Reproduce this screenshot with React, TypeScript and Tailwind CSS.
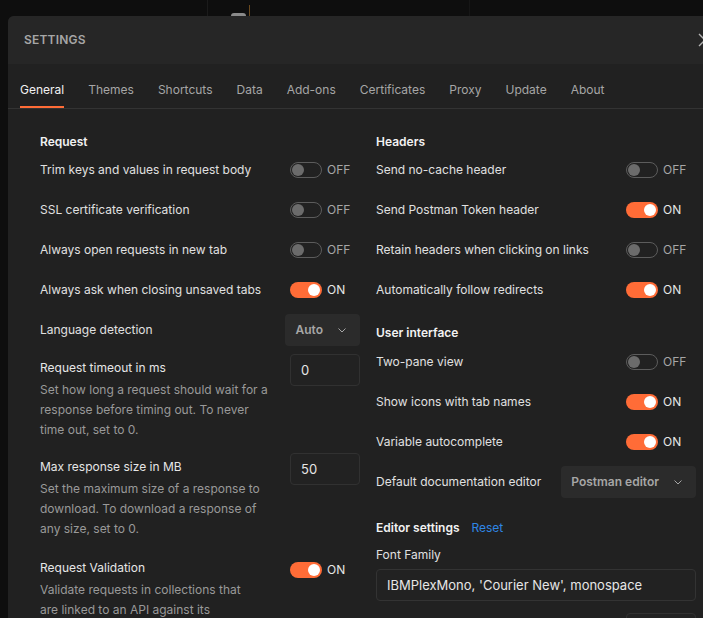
import React from "react";

const tabs = [
  "General",
  "Themes",
  "Shortcuts",
  "Data",
  "Add-ons",
  "Certificates",
  "Proxy",
  "Update",
  "About",
];

// Small chevron used in the select boxes
const Chevron = () => (
  <svg width="8" height="5" viewBox="0 0 8 5" fill="none">
    <path d="M0.5 0.5L4 4L7.5 0.5" stroke="#a6a6a6" strokeWidth="1" />
  </svg>
);

const Toggle: React.FC<{ on?: boolean }> = ({ on = false }) => (
  <div className="flex w-[70px] items-center gap-[5px]">
    {on ? (
      <span className="flex h-4 w-8 items-center justify-end rounded-full bg-[#ff6c37] px-[2px]">
        <span className="h-3 w-3 rounded-full bg-white" />
      </span>
    ) : (
      <span className="flex h-4 w-8 items-center justify-start rounded-full border border-[#5c5c5c] px-[1px]">
        <span className="h-3 w-3 rounded-full bg-[#6b6b6b]" />
      </span>
    )}
    <span className={on ? "text-[#e6e6e6]" : "text-[#a6a6a6]"}>
      {on ? "ON" : "OFF"}
    </span>
  </div>
);

const Select: React.FC<{ value: string }> = ({ value }) => (
  <div className="flex h-8 items-center gap-[15px] rounded bg-[#2b2b2b] pl-[10px] pr-[14px] font-semibold text-[#a6a6a6]">
    <span>{value}</span>
    <Chevron />
  </div>
);

const NumberInput: React.FC<{ value?: string }> = ({ value }) => (
  <div className="flex h-8 w-[70px] items-center rounded border border-[#313131] bg-[#222222] px-[10px] text-[13px] text-[#e6e6e6]">
    {value}
  </div>
);

const Row: React.FC<{
  label: string;
  first?: boolean;
  children: React.ReactNode;
}> = ({ label, first, children }) => (
  <div
    className={`flex h-8 items-center justify-between ${
      first ? "mt-0.5" : "mt-2"
    }`}
  >
    <span className="text-[#e0e0e0]">{label}</span>
    {children}
  </div>
);

const Heading: React.FC<{ children: React.ReactNode; className?: string }> = ({
  children,
  className = "",
}) => (
  <div className={`font-semibold text-[#f2f2f2] ${className}`}>{children}</div>
);

const DescBlock: React.FC<{
  title: string;
  desc: string;
  width: string;
  spacing: string;
  children: React.ReactNode;
}> = ({ title, desc, width, spacing, children }) => (
  <div className={`flex items-start justify-between ${spacing}`}>
    <div className={`pt-1 ${width}`}>
      <div className="text-[#e6e6e6]">{title}</div>
      <div className="mt-0.5 text-[#999999]">{desc}</div>
    </div>
    {children}
  </div>
);

export default function App() {
  return (
    <div className="h-screen w-screen overflow-hidden bg-[#0e0e0e] font-['Inter','Noto_Sans',sans-serif] text-[12px] leading-5">
      {/* App behind the modal */}
      <div className="flex h-4">
        <div className="w-[207px]" />
        <div className="h-full w-px bg-[#1b1b1b]" />
        <div className="w-[23px]" />
        <div className="h-[3px] w-[15px] self-end rounded-t bg-[#8a8a8a]" />
        <div className="w-[3px]" />
        <div className="h-[11px] w-px self-end bg-[#6b4a1e]" />
        <div className="w-[219px]" />
        <div className="h-full w-px bg-[#161616]" />
      </div>

      {/* Modal */}
      <div className="ml-2 w-[720px] overflow-hidden rounded-tl-md bg-[#212121]">
        {/* Header */}
        <div className="flex h-12 items-center justify-between bg-[#262626] pl-4 pr-4">
          <span className="font-semibold uppercase tracking-[0.2px] text-[#a6a6a6]">
            Settings
          </span>
          <svg width="14" height="14" viewBox="0 0 14 14" fill="none">
            <path
              d="M1 1L13 13M13 1L1 13"
              stroke="#b3b3b3"
              strokeWidth="1.4"
            />
          </svg>
        </div>

        {/* Tabs */}
        <div className="flex gap-6 border-b border-[#333333] px-3">
          {tabs.map((t, i) => (
            <div
              key={t}
              className={`border-b-2 pb-2 pt-[18px] leading-4 ${
                i === 0
                  ? "border-[#ff6c37] text-[#f2f2f2]"
                  : "border-transparent text-[#a6a6a6]"
              }`}
            >
              {t}
            </div>
          ))}
        </div>

        {/* Body */}
        <div className="flex gap-4 px-8 pt-[23px]">
          {/* Left column */}
          <div className="flex w-[320px] flex-col">
            <Heading>Request</Heading>
            <Row label="Trim keys and values in request body" first>
              <Toggle />
            </Row>
            <Row label="SSL certificate verification">
              <Toggle />
            </Row>
            <Row label="Always open requests in new tab">
              <Toggle />
            </Row>
            <Row label="Always ask when closing unsaved tabs">
              <Toggle on />
            </Row>
            <Row label="Language detection">
              <Select value="Auto" />
            </Row>

            <DescBlock
              title="Request timeout in ms"
              desc="Set how long a request should wait for a response before timing out. To never time out, set to 0."
              width="w-[236px]"
              spacing="mt-2"
            >
              <NumberInput value="0" />
            </DescBlock>
            <DescBlock
              title="Max response size in MB"
              desc="Set the maximum size of a response to download. To download a response of any size, set to 0."
              width="w-[236px]"
              spacing="mt-[13px]"
            >
              <NumberInput value="50" />
            </DescBlock>
            <DescBlock
              title="Request Validation"
              desc="Validate requests in collections that are linked to an API against its specification."
              width="w-[214px]"
              spacing="mt-[15px]"
            >
              <div className="flex h-8 items-center">
                <Toggle on />
              </div>
            </DescBlock>
          </div>

          {/* Right column */}
          <div className="flex w-[320px] flex-col">
            <Heading>Headers</Heading>
            <Row label="Send no-cache header" first>
              <Toggle />
            </Row>
            <Row label="Send Postman Token header">
              <Toggle on />
            </Row>
            <Row label="Retain headers when clicking on links">
              <Toggle />
            </Row>
            <Row label="Automatically follow redirects">
              <Toggle on />
            </Row>

            <Heading className="mt-[17px]">User interface</Heading>
            <div className="mt-[3px] flex h-8 items-center justify-between">
              <span className="text-[#e0e0e0]">Two-pane view</span>
              <Toggle />
            </div>
            <Row label="Show icons with tab names">
              <Toggle on />
            </Row>
            <Row label="Variable autocomplete">
              <Toggle on />
            </Row>
            <Row label="Default documentation editor">
              <Select value="Postman editor" />
            </Row>

            <div className="mt-5 flex items-center gap-3">
              <Heading>Editor settings</Heading>
              <span className="text-[#2f86e4]">Reset</span>
            </div>
            <div className="mt-[7px] text-[#e0e0e0]">Font Family</div>
            <div className="mt-1 flex h-8 items-center rounded border border-[#333333] bg-[#222222] px-[10px] text-[13px] text-[#e6e6e6]">
              IBMPlexMono, 'Courier New', monospace
            </div>
            <div className="mt-3 flex h-8 items-center justify-end">
              <NumberInput />
            </div>
          </div>
        </div>
      </div>
    </div>
  );
}
